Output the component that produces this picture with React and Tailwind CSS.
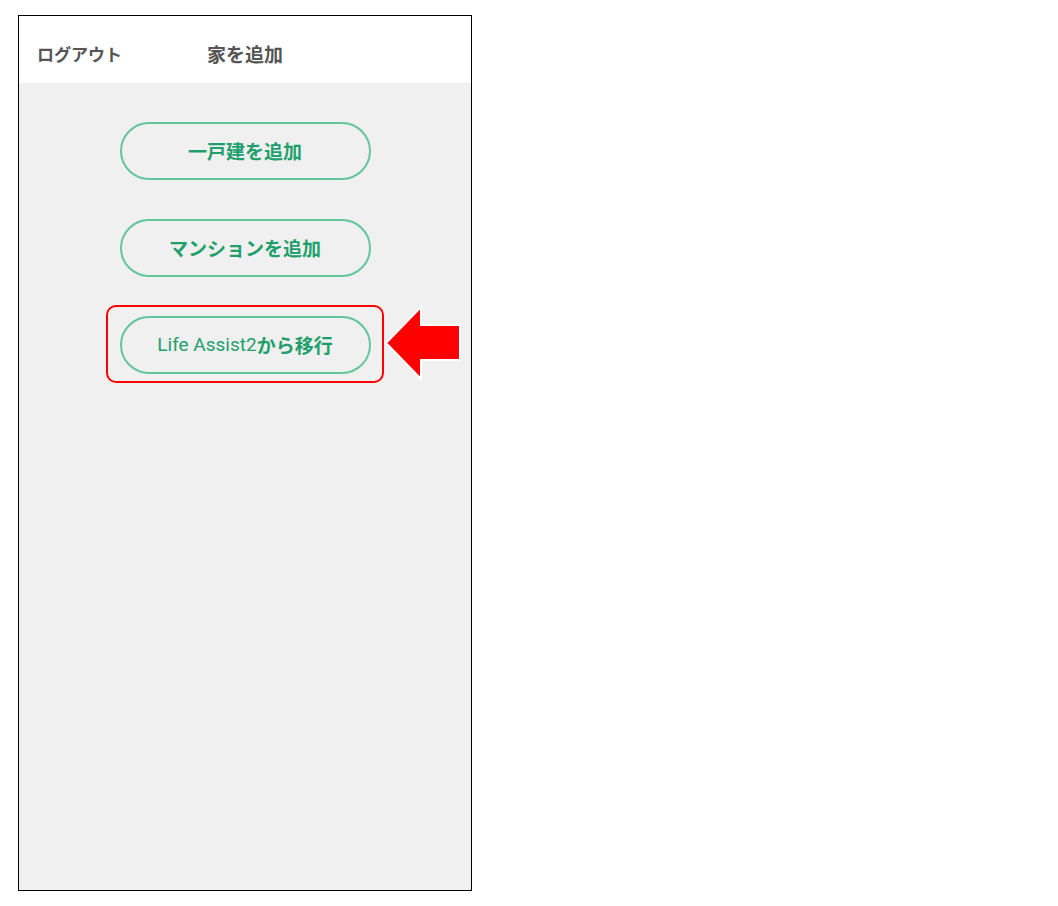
const FONT = { fontFamily: '"Noto Sans CJK JP", "Noto Sans", sans-serif' };
const LATIN = { fontFamily: 'Roboto, "Noto Sans CJK JP", sans-serif' };

const BUTTONS = ['一戸建を追加', 'マンションを追加'];

function PillButton({ children }) {
  return (
    <button className="w-[251px] h-[58px] rounded-full border-2 border-[#63c59e] text-[#1f9f6c] text-[19px] font-bold flex items-center justify-center">
      {children}
    </button>
  );
}

// Red annotation arrow pointing left at the highlighted button.
function Arrow() {
  return (
    <svg width="80" height="80" viewBox="0 0 80 80" className="absolute left-[264px] -top-[11px]">
      <polygon
        points="2,38 37,2 37,20 76,20 76,55 37,55 37,74"
        fill="#ff0000"
        stroke="#ffffff"
        strokeWidth="2"
        strokeLinejoin="miter"
      />
    </svg>
  );
}

export default function App() {
  return (
    <div className="min-h-screen bg-white pl-[18px] pt-[15px]" style={FONT}>
      <div className="w-[454px] h-[876px] border border-black bg-[#f0f0f0] flex flex-col">
        <div className="h-[67px] bg-white relative shrink-0">
          <span className="absolute left-[18px] top-[27px] text-[17px] leading-[22px] font-bold text-[#555555]">
            ログアウト
          </span>
          <div className="pt-[26px] text-center text-[19px] leading-[24px] font-bold text-[#555555]">
            家を追加
          </div>
        </div>

        <div className="flex flex-col items-center gap-[39px] pt-[39px]">
          {BUTTONS.map(label => (
            <PillButton key={label}>{label}</PillButton>
          ))}
          <div className="relative">
            <PillButton>
              <span className="font-normal" style={LATIN}>Life Assist2</span>
              <span>から移行</span>
            </PillButton>
            <div className="absolute -left-[14px] -right-[13px] -top-[11px] -bottom-[9px] border-2 border-[#ff0000] rounded-[10px] pointer-events-none" />
            <Arrow />
          </div>
        </div>
      </div>
    </div>
  );
}
